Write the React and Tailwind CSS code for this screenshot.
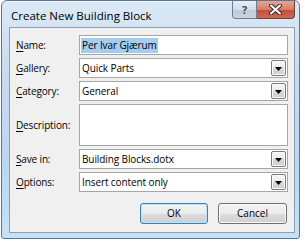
import React from "react";

const font = { fontFamily: '"Open Sans", "Noto Sans", sans-serif' };

function Label({ k, rest }) {
  return (
    <span className="w-[69px] shrink-0 pl-[6px] text-[10px] tracking-[-0.15px] text-black">
      <span className="underline underline-offset-[2px]">{k}</span>
      {rest}
    </span>
  );
}

function Arrow() {
  return (
    <div className="ml-auto mr-[1px] flex h-[16px] w-[15px] items-center justify-center rounded-[2px] border border-[#7b7b7b] bg-[linear-gradient(#f7f7f7,#e9e9e9_50%,#d7d7d7_51%,#cfcfcf)] shadow-[inset_0_0_0_1px_#fcfcfc]">
      <svg width="7" height="4" viewBox="0 0 7 4" className="mt-[1px]">
        <path d="M0 0h7L3.5 4z" fill="#000" />
      </svg>
    </div>
  );
}

function Combo({ value }) {
  return (
    <div className="flex h-[20px] flex-1 items-center border border-[#a6a6a6] bg-white">
      <span className="pl-[2px] text-[10px] tracking-[-0.1px] text-black">{value}</span>
      <Arrow />
    </div>
  );
}

function Row({ k, rest, children }) {
  return (
    <div className="flex items-center">
      <Label k={k} rest={rest} />
      {children}
    </div>
  );
}

export default function App() {
  return (
    <div className="h-[242px] w-[305px] bg-white pl-[1px]" style={font}>
      <div className="flex h-[239px] w-[299px] flex-col rounded-t-[6px] rounded-b-[3px] border border-[#5a7593] bg-[linear-gradient(#dbe9f6,#c7dcf0_30%,#bcd6ee_70%,#c6e2f6)] shadow-[inset_0_1px_0_#f4f9fd]">
        <div className="flex h-[26px] items-start">
          <span className="ml-[9px] mt-[7px] text-[11.5px] leading-[15px] text-black">
            Create New Building Block
          </span>
          <div className="ml-auto mr-[4px] flex">
            <div className="flex h-[18px] w-[25px] items-center justify-center rounded-bl-[4px] border border-t-0 border-[#6d7f92] bg-[linear-gradient(#e7eef5,#d3dde8_50%,#bcc9d6_51%,#c9d6e2)] text-[11px] font-bold leading-none text-[#3d4b59]">
              ?
            </div>
            <div className="flex h-[18px] w-[38px] items-center justify-center rounded-br-[4px] border border-l-0 border-t-0 border-[#7a3a32] bg-[linear-gradient(#e4a592,#d77d68_50%,#c5493a_51%,#d06a55)]">
              <svg width="13" height="11" viewBox="0 0 13 11">
                <path d="M2 1.5l9 8M11 1.5l-9 8" stroke="#3a2a28" strokeWidth="4" strokeLinecap="round" />
                <path d="M2 1.5l9 8M11 1.5l-9 8" stroke="#fff" strokeWidth="2" strokeLinecap="round" />
              </svg>
            </div>
          </div>
        </div>
        <div className="mb-[5px] ml-[7px] mr-[4px] flex flex-1 flex-col border border-[#8e9fb2] bg-[#f0f0f0] pr-[6px] pt-[7px]">
          <div className="flex flex-col gap-[3px]">
            <Row k="N" rest="ame:">
              <div className="flex h-[20px] flex-1 items-center border border-[#a6a6a6] bg-white pl-[1px]">
                <span className="bg-[#a3cdf1] px-[1px] text-[10px] leading-[15px] tracking-[-0.1px] text-black">
                  Per Ivar Gjærum
                </span>
              </div>
            </Row>
            <Row k="G" rest="allery:">
              <Combo value="Quick Parts" />
            </Row>
            <Row k="C" rest="ategory:">
              <Combo value="General" />
            </Row>
            <Row k="D" rest="escription:">
              <div className="h-[42px] flex-1 border border-[#a6a6a6] bg-white" />
            </Row>
            <Row k="S" rest="ave in:">
              <Combo value="Building Blocks.dotx" />
            </Row>
            <Row k="O" rest="ptions:">
              <Combo value="Insert content only" />
            </Row>
          </div>
          <div className="mt-[11px] flex justify-end gap-[10px] pr-[1px]">
            <button className="h-[21px] w-[68px] rounded-[3px] border border-[#3c7fb1] bg-[linear-gradient(#f2f2f2,#ebebeb_50%,#dddddd_51%,#cfcfcf)] text-[10px] text-black shadow-[inset_0_0_0_1px_#b6e3f8]">
              OK
            </button>
            <button className="h-[21px] w-[69px] rounded-[3px] border border-[#707070] bg-[linear-gradient(#f2f2f2,#ebebeb_50%,#dddddd_51%,#cfcfcf)] text-[10px] text-black shadow-[inset_0_0_0_1px_#fbfbfb]">
              Cancel
            </button>
          </div>
        </div>
      </div>
    </div>
  );
}
